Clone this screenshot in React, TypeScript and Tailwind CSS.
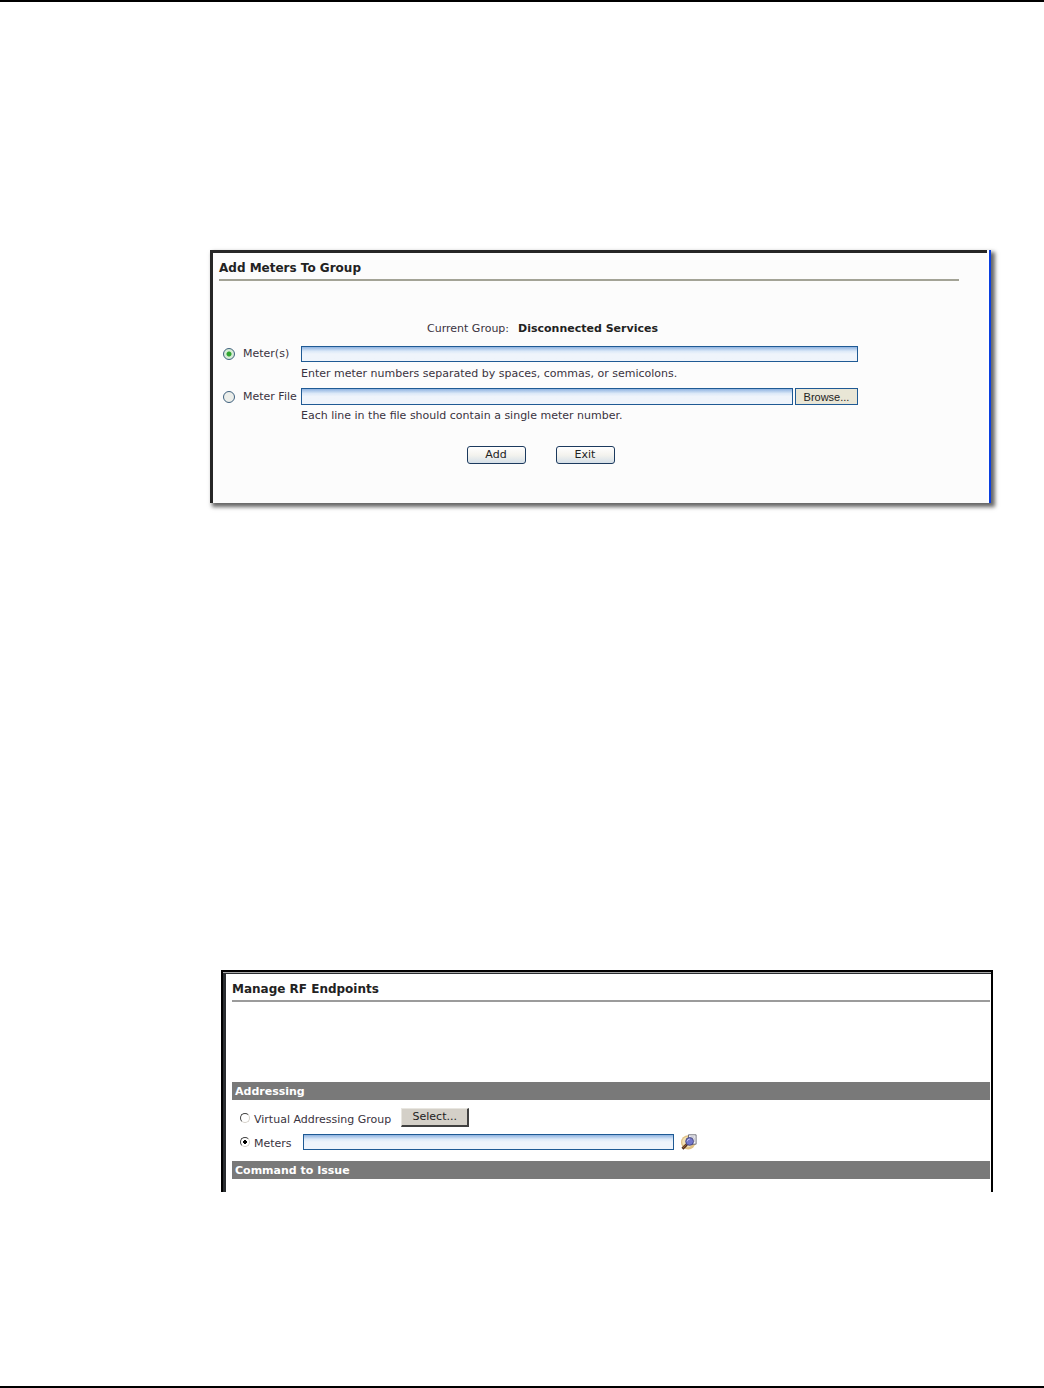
import { useState } from 'react';
import clsx from 'clsx';

const fieldStyle =
    'min-w-0 border border-[#1f5a94] bg-linear-to-b from-[#8fb3e0] via-[#dce9f8] via-30% to-[#eff4fb] to-50% px-1 text-[11px] outline-none';

const xpRadio =
    'h-3 w-3 shrink-0 appearance-none rounded-full border border-[#3f617e] bg-[#eceeea] checked:bg-[radial-gradient(circle,#2fa52f_2px,#d5ecd5_3px)]';

const classicRadio =
    'h-[10px] w-[10px] shrink-0 appearance-none rounded-full border border-[#d4d0c8] border-t-[#404040] border-l-[#404040] bg-white checked:bg-[radial-gradient(circle,#000_2px,transparent_2px)]';

const xpButton =
    'h-[18px] w-[59px] rounded-[3px] border border-[#1c3a5e] bg-linear-to-b from-white via-[#f4f3ee] to-[#d5dfe8] text-[11px] leading-4 text-[#222]';

function PanelTitle({ children }: { children: React.ReactNode }) {
    return <h2 className="pb-px pt-[5px] text-[12px] font-bold leading-5 text-[#222]">{children}</h2>;
}

function SectionBar({ label }: { label: string }) {
    return <h3 className="bg-[#797979] px-[3px] pt-px text-[11px] font-bold leading-[17px] text-white">{label}</h3>;
}

function LookupIcon() {
    return (
        <svg className="h-4 w-4" viewBox="0 0 16 16" aria-hidden="true">
            <circle cx="7.2" cy="8.4" r="7.2" fill="#e0c184" />
            <circle cx="6.4" cy="8" r="5.2" fill="#f3e2b4" />
            <path d="M7.5 0.8h7.6v9.4h-7.6z" fill="#f6f6fa" stroke="#55555f" strokeWidth="0.8" />
            <path d="M9.5 3h4M12.4 5h1.6M13 7h1" stroke="#9a9aa8" strokeWidth="0.8" />
            <path d="M5.8 10.6l-4.4 4.2" stroke="#4e2d1b" strokeWidth="2.8" />
            <path d="M5 10.8l-3.4 3.3" stroke="#b0703c" strokeWidth="1" />
            <circle cx="8.6" cy="7.4" r="3.9" fill="#7377cc" stroke="#44447a" strokeWidth="0.9" />
            <path d="M6.2 7.3a2.4 2.4 0 0 1 2.5-2.1" stroke="#c0c4f2" strokeWidth="1" fill="none" />
        </svg>
    );
}

function AddMetersPanel() {
    const [source, setSource] = useState('meters');

    return (
        <section className="flex shadow-[3px_3px_4px_1px_rgba(0,0,0,0.6)]">
            <div className="min-w-0 flex-1 border-l-[3px] border-t-[3px] border-[#262626] bg-[#fcfcfc] pb-[39px] pl-[6px] pr-7">
                <div className="border-b-2 border-[#a3a396]">
                    <PanelTitle>Add Meters To Group</PanelTitle>
                </div>
                <form className="mr-[101px]" onSubmit={(e) => e.preventDefault()}>
                    <p className="mt-10 flex justify-center gap-[9px] pl-2 leading-4">
                        <span>Current Group:</span>
                        <b className="text-[#222]">Disconnected Services</b>
                    </p>

                    <div className="mt-[9px] flex items-center">
                        <label className="flex w-[82px] shrink-0 items-center gap-2 pl-1">
                            <input type="radio" name="source" className={xpRadio}
                                checked={source === 'meters'} onChange={() => setSource('meters')} />
                            <span className="whitespace-nowrap leading-4">Meter(s)</span>
                        </label>
                        <input type="text" aria-label="Meter numbers" className={clsx(fieldStyle, 'h-4 flex-1')} />
                    </div>
                    <p className="mt-1 pl-[82px] leading-4">
                        Enter meter numbers separated by spaces, commas, or semicolons.
                    </p>

                    <div className="mt-[6px] flex items-center">
                        <label className="flex w-[82px] shrink-0 items-center gap-2 pl-1">
                            <input type="radio" name="source" className={xpRadio}
                                checked={source === 'file'} onChange={() => setSource('file')} />
                            <span className="whitespace-nowrap leading-4">Meter File</span>
                        </label>
                        <input type="text" aria-label="Meter file path" className={clsx(fieldStyle, 'h-[17px] flex-1')} />
                        <button type="button"
                            className="ml-[2px] h-[17px] w-[63px] border border-[#1f5a94] bg-[#e9e6d6] font-['Liberation_Sans',sans-serif] text-[11px] leading-4 text-[#222]">
                            Browse...
                        </button>
                    </div>
                    <p className="mt-[3px] pl-[82px] leading-4">
                        Each line in the file should contain a single meter number.
                    </p>

                    <div className="mt-[22px] flex justify-center gap-[30px] pl-1">
                        <button type="submit" className={xpButton}>Add</button>
                        <button type="button" className={xpButton}>Exit</button>
                    </div>
                </form>
            </div>
            <div className="w-1 shrink-0 border-r-2 border-[#0a3fe0] bg-white" />
        </section>
    );
}

function ManageEndpointsPanel() {
    const [target, setTarget] = useState('meters');

    return (
        <section className="border-2 border-b-0 border-black bg-[#a8a8a8] pt-px">
            <div className="border-l-[3px] border-t border-[#2a2d30] bg-white pb-[13px] pl-[6px] pr-px">
                <div className="border-b-2 border-[#9b9b9b]">
                    <PanelTitle>Manage RF Endpoints</PanelTitle>
                </div>
                <form className="mt-20" onSubmit={(e) => e.preventDefault()}>
                    <SectionBar label="Addressing" />
                    <div className="flex items-center pl-2 pt-2">
                        <label className="flex items-center gap-1">
                            <input type="radio" name="target" className={classicRadio}
                                checked={target === 'group'} onChange={() => setTarget('group')} />
                            <span className="pt-1 leading-[15px]">Virtual Addressing Group</span>
                        </label>
                        <button type="button"
                            className="ml-[10px] h-[19px] w-[68px] border border-b-2 border-r-2 border-[#404040] border-l-[#e8e6e0] border-t-[#e8e6e0] bg-[#d4d0c8] text-[11px] leading-4 text-[#222]">
                            Select...
                        </button>
                    </div>
                    <div className="mb-[10px] mt-[5px] flex items-center pl-2">
                        <label className="flex w-[63px] items-center gap-1">
                            <input type="radio" name="target" className={classicRadio}
                                checked={target === 'meters'} onChange={() => setTarget('meters')} />
                            <span className="pt-1 leading-[15px]">Meters</span>
                        </label>
                        <input type="text" aria-label="Meters" className={clsx(fieldStyle, 'h-4 w-[371px]')} />
                        <button type="button" aria-label="Look up meters" className="ml-[7px]">
                            <LookupIcon />
                        </button>
                    </div>
                    <SectionBar label="Command to Issue" />
                </form>
            </div>
        </section>
    );
}

export default function App() {
    return (
        <main className="min-h-screen border-y-2 border-black bg-white pb-10 pl-[210px] pr-[51px] pt-[248px] font-['DejaVu_Sans',Verdana,sans-serif] text-[11px] text-[#3a3340]">
            <div className="pr-[2px]">
                <AddMetersPanel />
            </div>
            <div className="mt-[467px] pl-[11px]">
                <ManageEndpointsPanel />
            </div>
        </main>
    );
}
